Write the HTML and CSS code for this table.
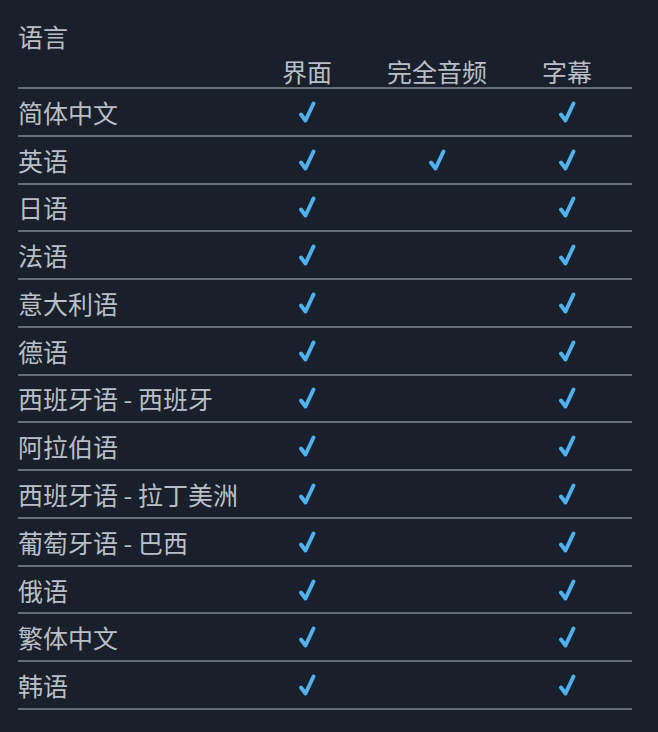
FILE: index.html
```html
<!DOCTYPE html>
<html lang="zh-CN">
<head>
<meta charset="utf-8">
<link rel="stylesheet" href="styles.css">
</head>
<body>
<div class="panel">
  <div class="title">语言</div>
  <div class="table">
    <div class="row head"><div class="lang"></div><div class="col">界面</div><div class="col">完全音频</div><div class="col">字幕</div></div>
    <div class="row"><div class="lang">简体中文</div><div class="col"><svg class="ck" viewBox="0 0 18 22"><path d="M3 13.5 L7.5 19.5 L15.5 2.5"/></svg></div><div class="col"></div><div class="col"><svg class="ck" viewBox="0 0 18 22"><path d="M3 13.5 L7.5 19.5 L15.5 2.5"/></svg></div></div>
    <div class="row"><div class="lang">英语</div><div class="col"><svg class="ck" viewBox="0 0 18 22"><path d="M3 13.5 L7.5 19.5 L15.5 2.5"/></svg></div><div class="col"><svg class="ck" viewBox="0 0 18 22"><path d="M3 13.5 L7.5 19.5 L15.5 2.5"/></svg></div><div class="col"><svg class="ck" viewBox="0 0 18 22"><path d="M3 13.5 L7.5 19.5 L15.5 2.5"/></svg></div></div>
    <div class="row"><div class="lang">日语</div><div class="col"><svg class="ck" viewBox="0 0 18 22"><path d="M3 13.5 L7.5 19.5 L15.5 2.5"/></svg></div><div class="col"></div><div class="col"><svg class="ck" viewBox="0 0 18 22"><path d="M3 13.5 L7.5 19.5 L15.5 2.5"/></svg></div></div>
    <div class="row"><div class="lang">法语</div><div class="col"><svg class="ck" viewBox="0 0 18 22"><path d="M3 13.5 L7.5 19.5 L15.5 2.5"/></svg></div><div class="col"></div><div class="col"><svg class="ck" viewBox="0 0 18 22"><path d="M3 13.5 L7.5 19.5 L15.5 2.5"/></svg></div></div>
    <div class="row"><div class="lang">意大利语</div><div class="col"><svg class="ck" viewBox="0 0 18 22"><path d="M3 13.5 L7.5 19.5 L15.5 2.5"/></svg></div><div class="col"></div><div class="col"><svg class="ck" viewBox="0 0 18 22"><path d="M3 13.5 L7.5 19.5 L15.5 2.5"/></svg></div></div>
    <div class="row"><div class="lang">德语</div><div class="col"><svg class="ck" viewBox="0 0 18 22"><path d="M3 13.5 L7.5 19.5 L15.5 2.5"/></svg></div><div class="col"></div><div class="col"><svg class="ck" viewBox="0 0 18 22"><path d="M3 13.5 L7.5 19.5 L15.5 2.5"/></svg></div></div>
    <div class="row"><div class="lang">西班牙语 - 西班牙</div><div class="col"><svg class="ck" viewBox="0 0 18 22"><path d="M3 13.5 L7.5 19.5 L15.5 2.5"/></svg></div><div class="col"></div><div class="col"><svg class="ck" viewBox="0 0 18 22"><path d="M3 13.5 L7.5 19.5 L15.5 2.5"/></svg></div></div>
    <div class="row"><div class="lang">阿拉伯语</div><div class="col"><svg class="ck" viewBox="0 0 18 22"><path d="M3 13.5 L7.5 19.5 L15.5 2.5"/></svg></div><div class="col"></div><div class="col"><svg class="ck" viewBox="0 0 18 22"><path d="M3 13.5 L7.5 19.5 L15.5 2.5"/></svg></div></div>
    <div class="row"><div class="lang">西班牙语 - 拉丁美洲</div><div class="col"><svg class="ck" viewBox="0 0 18 22"><path d="M3 13.5 L7.5 19.5 L15.5 2.5"/></svg></div><div class="col"></div><div class="col"><svg class="ck" viewBox="0 0 18 22"><path d="M3 13.5 L7.5 19.5 L15.5 2.5"/></svg></div></div>
    <div class="row"><div class="lang">葡萄牙语 - 巴西</div><div class="col"><svg class="ck" viewBox="0 0 18 22"><path d="M3 13.5 L7.5 19.5 L15.5 2.5"/></svg></div><div class="col"></div><div class="col"><svg class="ck" viewBox="0 0 18 22"><path d="M3 13.5 L7.5 19.5 L15.5 2.5"/></svg></div></div>
    <div class="row"><div class="lang">俄语</div><div class="col"><svg class="ck" viewBox="0 0 18 22"><path d="M3 13.5 L7.5 19.5 L15.5 2.5"/></svg></div><div class="col"></div><div class="col"><svg class="ck" viewBox="0 0 18 22"><path d="M3 13.5 L7.5 19.5 L15.5 2.5"/></svg></div></div>
    <div class="row"><div class="lang">繁体中文</div><div class="col"><svg class="ck" viewBox="0 0 18 22"><path d="M3 13.5 L7.5 19.5 L15.5 2.5"/></svg></div><div class="col"></div><div class="col"><svg class="ck" viewBox="0 0 18 22"><path d="M3 13.5 L7.5 19.5 L15.5 2.5"/></svg></div></div>
    <div class="row"><div class="lang">韩语</div><div class="col"><svg class="ck" viewBox="0 0 18 22"><path d="M3 13.5 L7.5 19.5 L15.5 2.5"/></svg></div><div class="col"></div><div class="col"><svg class="ck" viewBox="0 0 18 22"><path d="M3 13.5 L7.5 19.5 L15.5 2.5"/></svg></div></div>
  </div>
</div>
</body>
</html>
```
FILE: styles.css
```css
html, body {
  margin: 0;
  padding: 0;
  background: #19202b;
}
body {
  width: 658px;
  height: 732px;
  overflow: hidden;
  font-family: "Noto Sans CJK SC", "Noto Sans", sans-serif;
  color: #b8bfc6;
}
.panel {
  padding: 18px 26px 0 18px;
}
.title {
  font-size: 25px;
  line-height: 36px;
  height: 36px;
}
.table {
  display: flex;
  flex-direction: column;
}
.row {
  display: grid;
  grid-template-columns: 224px 130px 130px 130px;
  align-items: center;
  height: 47.77px;
  box-sizing: border-box;
  border-bottom: 2px solid #646d79;
  font-size: 25px;
}
.row.head {
  height: 35px;
  align-items: end;
}
.row.head .col {
  line-height: 32px;
}
.lang {
  white-space: nowrap;
  line-height: 34px;
}
.col {
  display: flex;
  justify-content: center;
  align-items: center;
  white-space: nowrap;
}
.ck {
  width: 18px;
  height: 22px;
  display: block;
}
.ck path {
  fill: none;
  stroke: #4fb2ef;
  stroke-width: 3.9;
  stroke-linecap: round;
  stroke-linejoin: round;
}
```
